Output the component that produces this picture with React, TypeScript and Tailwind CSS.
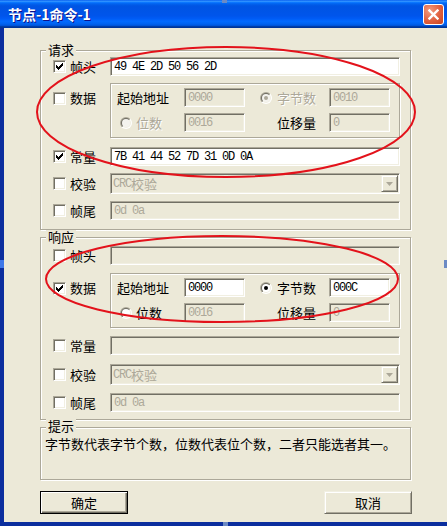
import React from 'react';

// classic (non-themed) win32 bevels
const sunken =
  'border border-t-[#ACA899] border-l-[#ACA899] border-r-white border-b-white shadow-[inset_1px_1px_0_#716F64,inset_-1px_-1px_0_#F1EFE2]';
const raised =
  'border border-t-[#F1EFE2] border-l-[#F1EFE2] border-r-[#716F64] border-b-[#716F64] shadow-[inset_1px_1px_0_#fff,inset_-1px_-1px_0_#ACA899]';
const etched = 'border border-[#ACA899] shadow-[inset_1px_1px_0_#fff,1px_1px_0_#fff]';
const mono = "font-['Liberation_Mono',monospace] text-[12px] tracking-[-1.2px]";
const dis = 'text-[#ACA899] [text-shadow:1px_1px_0_#fff]';

const Check = ({ on }: { on?: boolean }) => (
  <span className={`w-[13px] h-[13px] shrink-0 bg-white flex items-center justify-center ${sunken}`}>
    {on && (
      <svg width="7" height="7" viewBox="0 0 7 7" shapeRendering="crispEdges">
        {[2, 3, 4, 3, 2, 1, 0].map((y, x) => (
          <rect key={x} x={x} y={y} width="1" height="3" fill="#000" />
        ))}
      </svg>
    )}
  </span>
);

const Radio = ({ on, disabled }: { on?: boolean; disabled?: boolean }) => (
  <svg width="12" height="12" viewBox="0 0 12 12" className="shrink-0">
    <defs>
      <linearGradient id="rad-o" x1="0" y1="0" x2="1" y2="1">
        <stop offset="0.5" stopColor="#ACA899" />
        <stop offset="0.5" stopColor="#fff" />
      </linearGradient>
      <linearGradient id="rad-i" x1="0" y1="0" x2="1" y2="1">
        <stop offset="0.5" stopColor="#716F64" />
        <stop offset="0.5" stopColor="#F1EFE2" />
      </linearGradient>
    </defs>
    <circle cx="6" cy="6" r="6" fill="url(#rad-o)" />
    <circle cx="6" cy="6" r="5" fill="url(#rad-i)" />
    <circle cx="6" cy="6" r="4" fill={disabled ? '#F4F3EE' : '#fff'} />
    {on && <circle cx="6" cy="6" r="2" fill={disabled ? '#ACA899' : '#000'} />}
  </svg>
);

const Field = ({ value, disabled }: { value?: React.ReactNode; disabled?: boolean }) => (
  <div
    className={`h-[19px] ${sunken} flex items-center pl-[3px] overflow-hidden whitespace-nowrap ${
      disabled ? 'bg-[#ECE9D8] text-[#ACA899]' : 'bg-white text-black'
    }`}
  >
    {value}
  </div>
);

const Combo = () => (
  <div className={`h-[21px] ${sunken} bg-[#ECE9D8] flex items-center justify-between`}>
    <span className="pl-[2px] text-[#ACA899] flex items-center">
      <span className={mono}>CRC</span>
      <span>校验</span>
    </span>
    <span className={`w-[17px] h-[17px] mr-[1px] bg-[#ECE9D8] flex items-center justify-center ${raised}`}>
      <svg width="7" height="4" viewBox="0 0 7 4">
        <path d="M0 0h7L3.5 4z" fill="#ACA899" />
      </svg>
    </span>
  </div>
);

const Row = ({
  label,
  on,
  top,
  className = '',
  children,
}: {
  label: string;
  on?: boolean;
  top?: boolean;
  className?: string;
  children: React.ReactNode;
}) => (
  <div className={`flex ${top ? 'items-start' : 'items-center'} ${className}`}>
    <div className={`w-[57px] shrink-0 flex items-center gap-[4px] ${top ? 'pt-[8px]' : ''}`}>
      <Check on={on} />
      <span>{label}</span>
    </div>
    <div className="flex-1">{children}</div>
  </div>
);

const DataGroup = ({ enabled }: { enabled: boolean }) => (
  <div className={`${etched} pl-[6px] pt-[4px] pb-[5px] grid grid-cols-[67px_61px_84px_61px] gap-y-[6px] items-center`}>
    <span>起始地址</span>
    <Field value={<span className={mono}>0000</span>} disabled={!enabled} />
    <span className="flex items-center pl-[15px] gap-[5px]">
      <Radio on disabled={!enabled} />
      <span className={enabled ? '' : dis}>字节数</span>
    </span>
    <Field value={<span className={mono}>{enabled ? '000C' : '0010'}</span>} disabled={!enabled} />
    <span className="flex items-center pl-[3px] gap-[4px]">
      <Radio disabled={!enabled} />
      <span className={enabled ? '' : dis}>位数</span>
    </span>
    <Field value={<span className={mono}>0016</span>} disabled />
    <span className="pl-[32px]">位移量</span>
    <Field value={<span className={mono}>0</span>} disabled />
  </div>
);

const Group = ({
  title,
  className = '',
  labelClass = '-top-[8px]',
  children,
}: {
  title: string;
  className?: string;
  labelClass?: string;
  children: React.ReactNode;
}) => (
  <div className={`relative w-[371px] ${etched} ${className}`}>
    <span className={`absolute left-[5px] px-[2px] bg-[#ECE9D8] leading-[13px] ${labelClass}`}>{title}</span>
    {children}
  </div>
);

export default function App() {
  return (
    <div className="relative w-[447px] h-[526px] overflow-hidden bg-[#ECE9D8] flex flex-col text-black text-[13px] leading-[14px] font-['Noto_Sans_CJK_SC',sans-serif]">
      {/* title bar */}
      <div className="h-[28px] shrink-0 flex items-center justify-between pl-[8px] pr-[3px] bg-[linear-gradient(to_bottom,#0058EE_0%,#3593FF_4%,#288EFF_6%,#127DFF_8%,#036FFC_10%,#0262EE_14%,#0057E5_20%,#0054E3_24%,#0055EB_56%,#005BF5_66%,#026AFE_76%,#0062EF_86%,#0052D6_92%,#0040AB_94%,#003092_100%)]">
        <span className="text-white text-[14px] font-bold [text-shadow:1px_1px_0_#0F1089]">节点-1命令-1</span>
        <span className="w-[21px] h-[21px] rounded-[3px] border border-white flex items-center justify-center bg-[radial-gradient(circle_at_30%_30%,#F39B7E,#E0603F_55%,#C8431F)]">
          <svg width="11" height="11" viewBox="0 0 11 11">
            <path d="M1.5 1.5l8 8M9.5 1.5l-8 8" stroke="#fff" strokeWidth="2.4" strokeLinecap="square" />
          </svg>
        </span>
      </div>

      {/* client */}
      <div className="flex-1 flex flex-col pl-[36px] border-l-4 border-b-4 border-[#0B2E9E]">
        <Group title="请求" className="mt-[22px] pl-[12px] pr-[10px] pt-[6px] pb-[9px]">
          <Row label="帧头" on>
            <Field value={<span className={mono}>49 4E 2D 50 56 2D</span>} />
          </Row>
          <Row label="数据" top className="mt-[7px]">
            <DataGroup enabled={false} />
          </Row>
          <Row label="常量" on className="mt-[9px]">
            <Field value={<span className={mono}>7B 41 44 52 7D 31 0D 0A</span>} />
          </Row>
          <Row label="校验" className="mt-[7px]">
            <Combo />
          </Row>
          <Row label="帧尾" className="mt-[7px]">
            <Field value={<span className={mono}>0d 0a</span>} disabled />
          </Row>
        </Group>

        <Group title="响应" className="mt-[7px] pl-[12px] pr-[10px] pt-[8px] pb-[7px]">
          <Row label="帧头">
            <Field disabled />
          </Row>
          <Row label="数据" on top className="mt-[8px]">
            <DataGroup enabled />
          </Row>
          <Row label="常量" className="mt-[8px]">
            <Field disabled />
          </Row>
          <Row label="校验" className="mt-[9px]">
            <Combo />
          </Row>
          <Row label="帧尾" className="mt-[8px]">
            <Field value={<span className={mono}>0d 0a</span>} disabled />
          </Row>
        </Group>

        <Group title="提示" labelClass="-top-[9px]" className="mt-[7px] h-[53px] pl-[4px] pt-[9px]">
          <p className="leading-[13px]">字节数代表字节个数，位数代表位个数，二者只能选者其一。</p>
        </Group>

        <div className="w-[372px] mt-[11px] flex justify-between">
          <button className="w-[88px] h-[23px] bg-[#ECE9D8] border border-black shadow-[inset_1px_1px_0_#fff,inset_-1px_-1px_0_#716F64,inset_-2px_-2px_0_#ACA899]">
            确定
          </button>
          <button className={`w-[88px] h-[23px] bg-[#ECE9D8] ${raised}`}>取消</button>
        </div>
      </div>

      {/* capture-tool resize handles */}
      <span className="absolute left-[222px] top-0 w-[5px] h-[3px] bg-[#6C8AC4]" />
      <span className="absolute left-0 top-[260px] w-[4px] h-[8px] bg-[#3F78E8]" />
      <span className="absolute right-0 top-[260px] w-[3px] h-[8px] bg-[#6C8AC4]" />
      <span className="absolute left-[223px] bottom-0 w-[5px] h-[4px] bg-[#6C8AC4]" />

      {/* red annotation rings */}
      <svg className="absolute inset-0 pointer-events-none" width="447" height="526" viewBox="0 0 447 526">
        <ellipse cx="226" cy="112" rx="189" ry="65" fill="none" stroke="#E3121B" strokeWidth="2" />
        <ellipse cx="222" cy="279" rx="176" ry="43" fill="none" stroke="#E3121B" strokeWidth="2" />
      </svg>
    </div>
  );
}
